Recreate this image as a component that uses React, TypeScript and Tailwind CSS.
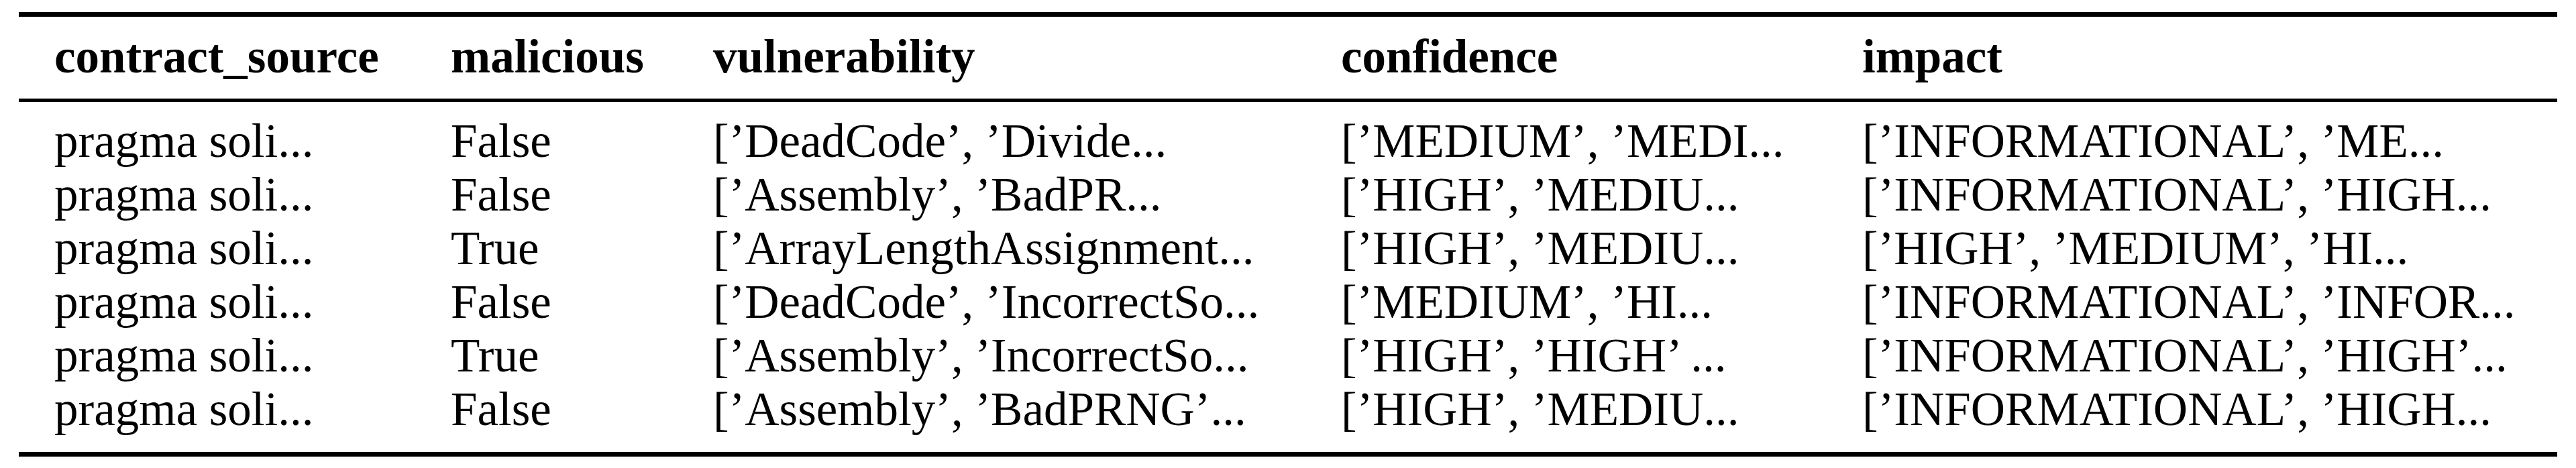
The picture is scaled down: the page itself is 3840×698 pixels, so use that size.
const headers = ["contract_source", "malicious", "vulnerability", "confidence", "impact"];

const rows: string[][] = [
  ["pragma soli...", "False", "[’DeadCode’, ’Divide...", "[’MEDIUM’, ’MEDI...", "[’INFORMATIONAL’, ’ME..."],
  ["pragma soli...", "False", "[’Assembly’, ’BadPR...", "[’HIGH’, ’MEDIU...", "[’INFORMATIONAL’, ’HIGH..."],
  ["pragma soli...", "True", "[’ArrayLengthAssignment...", "[’HIGH’, ’MEDIU...", "[’HIGH’, ’MEDIUM’, ’HI..."],
  ["pragma soli...", "False", "[’DeadCode’, ’IncorrectSo...", "[’MEDIUM’, ’HI...", "[’INFORMATIONAL’, ’INFOR..."],
  ["pragma soli...", "True", "[’Assembly’, ’IncorrectSo...", "[’HIGH’, ’HIGH’ ...", "[’INFORMATIONAL’, ’HIGH’..."],
  ["pragma soli...", "False", "[’Assembly’, ’BadPRNG’...", "[’HIGH’, ’MEDIU...", "[’INFORMATIONAL’, ’HIGH..."],
];

const grid = "grid grid-cols-[591px_391px_936px_777px_1fr] pl-[53px] whitespace-pre";

export default function App() {
  return (
    <div className="w-[3840px] h-[698px] bg-white text-black font-['Liberation_Serif','Times_New_Roman',serif] text-[71px] leading-[80px] pt-[18px]">
      <div className="ml-[28px] w-[3784px]">
        {/* top rule */}
        <div className="h-[7px] bg-black" />

        <div className={`${grid} mt-[19px] font-bold`}>
          {headers.map((h) => (
            <div key={h}>{h}</div>
          ))}
        </div>

        {/* mid rule */}
        <div className="h-[5px] bg-black mt-[23px]" />

        <div className="mt-[18px]">
          {rows.map((r, i) => (
            <div key={i} className={grid}>
              {r.map((c, j) => (
                <div key={j}>{c}</div>
              ))}
            </div>
          ))}
        </div>

        {/* bottom rule */}
        <div className="h-[7px] bg-black mt-[24px]" />
      </div>
    </div>
  );
}
